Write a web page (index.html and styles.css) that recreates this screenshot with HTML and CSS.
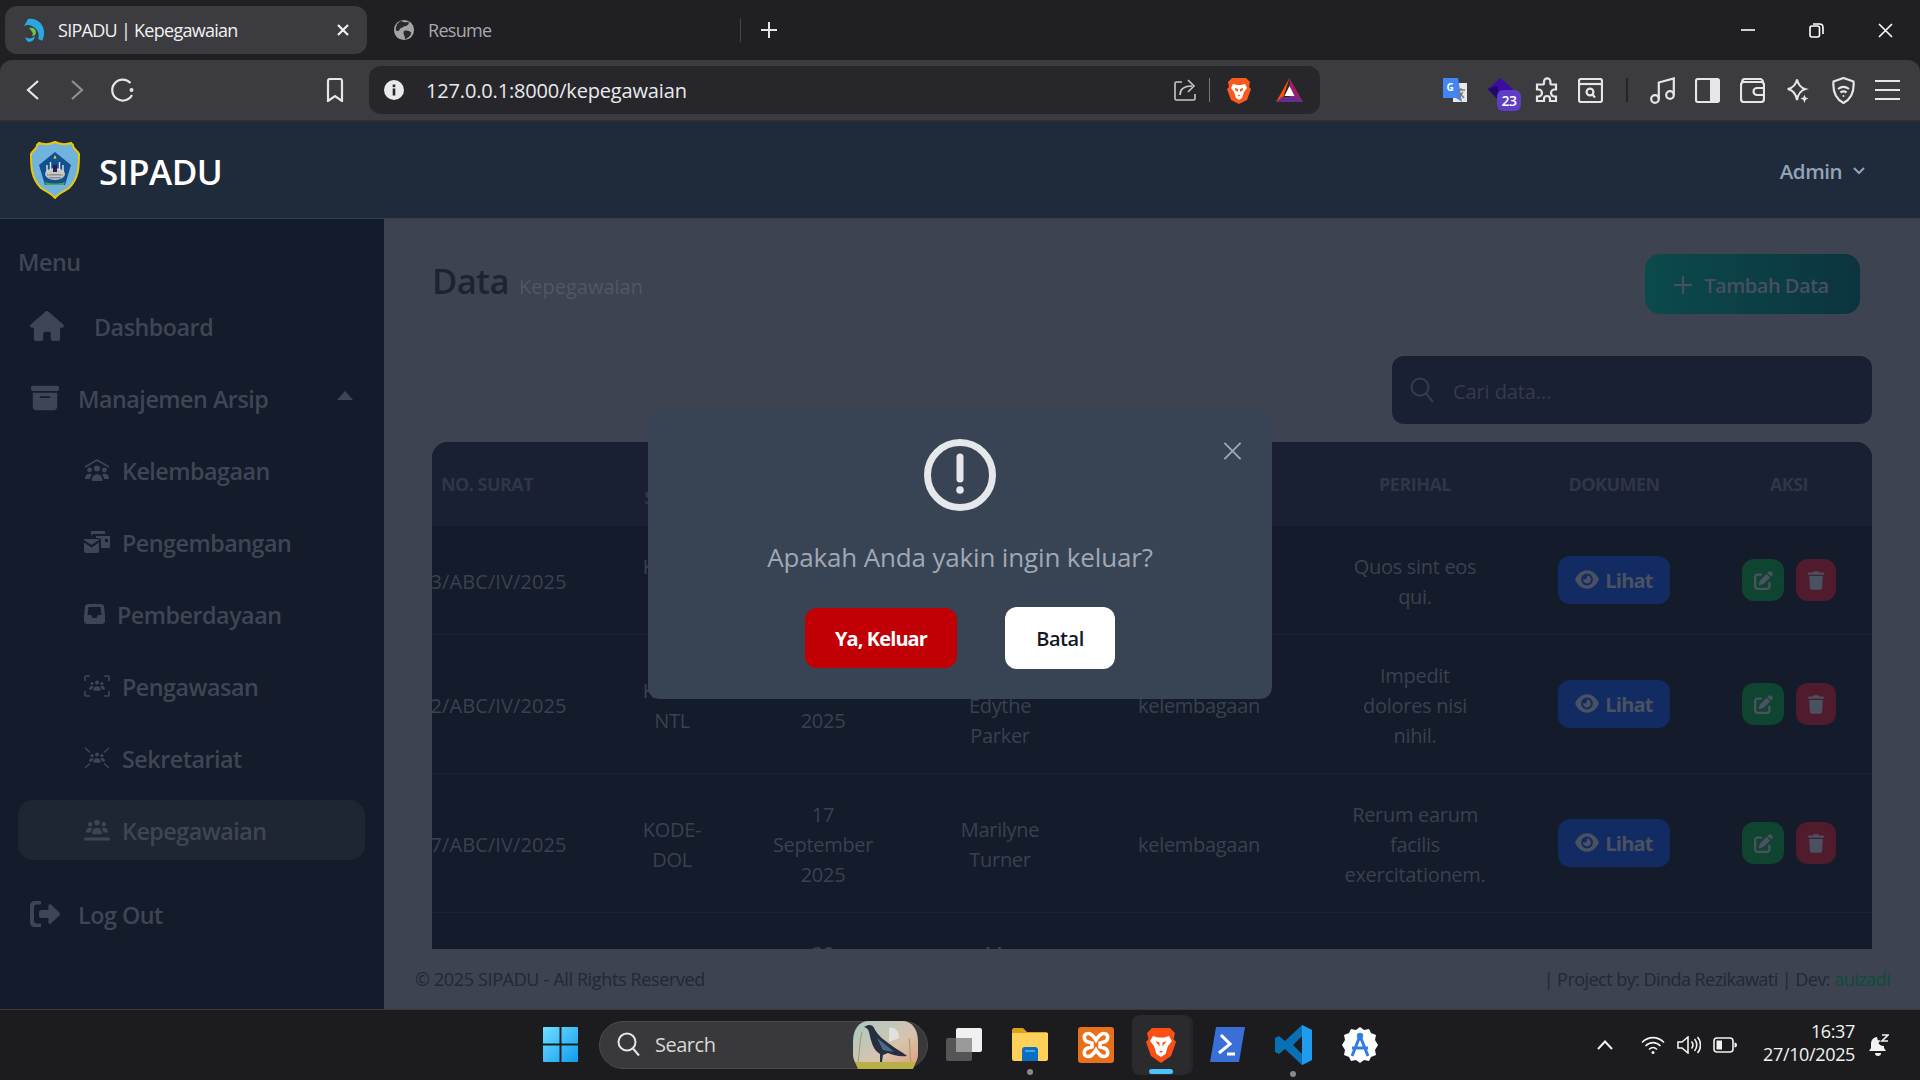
FILE: index.html
```html
<!DOCTYPE html>
<html lang="id">

<head>
    <meta charset="UTF-8">
    <title>SIPADU | Kepegawaian</title>
    <link rel="stylesheet" href="styles.css">
</head>

<body>
    <svg class="defs" width="0" height="0">
        <symbol id="trio" viewBox="0 0 24 16">
            <circle cx="12" cy="3.400" r="3"/>
            <circle cx="4.600" cy="5" r="2.400"/>
            <circle cx="19.400" cy="5" r="2.400"/>
            <path d="M6.600 16c0-4.600 2.200-6.800 5.400-6.800s5.400 2.200 5.400 6.800z"/>
            <path d="M0 14c0-3.400 1.700-5.200 4.400-5.200 1.100 0 2 .3 2.700 .8-1.300 1.300-2 3-2.200 4.400z"/>
            <path d="M24 14c0-3.400-1.700-5.200-4.400-5.200-1.100 0-2 .3-2.700 .8 1.300 1.300 2 3 2.200 4.400z"/>
        </symbol>
        <symbol id="eye" viewBox="0 0 576 512">
            <path d="M288 32c-80.800 0-145.500 36.800-192.600 80.600C48.600 156 17.300 208 2.500 243.700c-3.300 7.900-3.300 16.700 0 24.600C17.300 304 48.600 356 95.400 399.400C142.500 443.200 207.200 480 288 480s145.500-36.800 192.600-80.600c46.800-43.500 78.100-95.400 93-131.100c3.300-7.900 3.300-16.700 0-24.600c-14.900-35.700-46.200-87.700-93-131.100C433.500 68.800 368.800 32 288 32zM144 256a144 144 0 1 1 288 0 144 144 0 1 1 -288 0zm144-64c0 35.300-28.700 64-64 64c-7.100 0-13.900-1.200-20.300-3.300c-5.500-1.800-11.900 1.600-11.700 7.400c.3 6.900 1.300 13.800 3.200 20.700c13.700 51.200 66.400 81.600 117.600 67.900s81.600-66.400 67.900-117.600c-11.100-41.500-47.800-69.400-88.600-71.100c-5.800-.2-9.200 6.100-7.400 11.700c2.100 6.400 3.300 13.200 3.300 20.300z"/>
        </symbol>
        <symbol id="edit" viewBox="0 0 512 512">
            <path d="M471.600 21.700c-21.900-21.900-57.300-21.900-79.200 0L362.300 51.700l97.900 97.900 30.100-30.100c21.900-21.900 21.900-57.300 0-79.200L471.600 21.700zm-299.200 220c-6.100 6.100-10.800 13.600-13.500 21.900l-29.600 88.800c-2.900 8.600-.6 18.100 5.800 24.600s15.900 8.700 24.600 5.800l88.800-29.600c8.200-2.700 15.700-7.400 21.900-13.500L437.700 172.300 339.700 74.300 172.400 241.700zM96 64C43 64 0 107 0 160V416c0 53 43 96 96 96H352c53 0 96-43 96-96V320c0-17.700-14.300-32-32-32s-32 14.300-32 32v96c0 17.700-14.300 32-32 32H96c-17.700 0-32-14.300-32-32V160c0-17.700 14.300-32 32-32h96c17.700 0 32-14.300 32-32s-14.300-32-32-32H96z"/>
        </symbol>
        <symbol id="trash" viewBox="0 0 448 512">
            <path d="M135.200 17.700L128 32H32C14.300 32 0 46.300 0 64S14.300 96 32 96H416c17.700 0 32-14.300 32-32s-14.300-32-32-32H320l-7.200-14.300C307.400 6.800 296.300 0 284.200 0H163.800c-12.100 0-23.200 6.800-28.600 17.700zM416 128H32L53.200 467c1.600 25.300 22.600 45 47.900 45H346.900c25.300 0 46.300-19.700 47.900-45L416 128z"/>
        </symbol>
    </svg>

    <!-- tab strip -->
    <div class="tabstrip">
        <div class="tab tab-active">
            <svg class="favicon" viewBox="0 0 24 24">
                <path fill="#29a9e1" d="M6 1c8-1 15 4 16 12 .5 4-.5 7-2 10-1-1-3-2-4-2 1-2 1-6-1-9-2-3-6-5-10-5L2 8z"/>
                <path fill="#29a9e1" d="M3 19c3 2 7 2 10-1 0 3-3 6-6 6-2 0-3-3-4-5z"/>
                <path fill="#6cc24a" d="M7 10c4-1 7 1 7 4s-2 4-4 4c1-2 1-3 0-4-1-2-2-3-3-4z"/>
            </svg>
            <span class="tab-title">SIPADU | Kepegawaian</span>
            <svg class="tab-close" viewBox="0 0 14 14"><path d="M2 2l10 10M12 2L2 12"/></svg>
        </div>
        <div class="tab tab-other">
            <svg class="favicon-globe" viewBox="0 0 24 24">
                <circle cx="12" cy="12" r="11" fill="#a4a4a8"/>
                <path fill="#2a2a2e" d="M9 2c3 2 5 2 8 1 1 3-2 5-5 5-1 2-4 1-5 4-1 2-3 1-4 0 0-5 2-8 6-10zM12 13c3-1 6 0 8 2-1 4-4 6-7 7 1-3-3-6-1-9z"/>
            </svg>
            <span class="tab-title tab-title-dim">Resume</span>
        </div>
        <div class="tab-sep"></div>
        <svg class="tab-new" viewBox="0 0 16 16"><path d="M8 0v16M0 8h16"/></svg>
        <div class="window-btns">
            <svg class="win-min" viewBox="0 0 14 2"><path d="M0 1h14"/></svg>
            <svg class="win-restore" viewBox="0 0 15 15"><rect x="1" y="3" width="9.500" height="11" rx="2"/><path d="M4 1h6.500c2 0 3.500 1.500 3.500 3.500V11"/></svg>
            <svg class="win-close" viewBox="0 0 15 15"><path d="M1 1l13 13M14 1L1 14"/></svg>
        </div>
    </div>

    <!-- toolbar -->
    <div class="toolbar">
        <div class="nav-btns">
            <svg class="tool tool-back" viewBox="0 0 14 22"><path d="M12 2L2 11l10 9"/></svg>
            <svg class="tool tool-forward" viewBox="0 0 14 22"><path d="M2 2l10 9-10 9"/></svg>
            <svg class="tool tool-reload" viewBox="0 0 25 25"><path d="M20.500 5A10.500 10.500 0 1 0 22 17"/><circle cx="21.500" cy="12" r="2" class="solid"/></svg>
            <svg class="tool tool-bookmark" viewBox="0 0 18 24"><path d="M2 3c0-1 .7-2 2-2h10c1.300 0 2 1 2 2v20l-7-5-7 5z"/></svg>
        </div>
        <div class="urlbar">
            <svg class="url-info" viewBox="0 0 20 20"><circle cx="10" cy="10" r="10" fill="#e8eaed"/><rect x="8.700" y="8.500" width="2.600" height="7" fill="#27272b"/><rect x="8.700" y="4.500" width="2.600" height="2.600" fill="#27272b"/></svg>
            <span class="url-text">127.0.0.1:8000/kepegawaian</span>
            <svg class="tool url-share" viewBox="0 0 22 22"><path d="M8 3H2.500C1.500 3 1 3.500 1 4.500v15c0 1 .5 1.500 1.500 1.500h17c1 0 1.500-.5 1.500-1.500V15"/><path d="M6 16c0-6 4-9 12-9M14 1l6 6-6 6"/></svg>
            <div class="url-sep"></div>
            <svg class="brave-mini" viewBox="0 0 24 27">
                <path fill="#fb5a1c" d="M5 1h14l4 4-1 5 2 2-4 11-8 4-8-4-4-11 2-2-1-5z"/>
                <path fill="#fff" d="M6 7l4 1h4l4-1 2 4-3 4-2 6-3 2-3-2-2-6-3-4z"/>
                <path fill="#fb5a1c" d="M8 11l3 1v3l-3-2zM16 11l-3 1v3l3-2zM10.500 18h3L12 19.500z"/>
            </svg>
            <svg class="bat-mini" viewBox="0 0 27 24">
                <path fill="#9e1f63" d="M13.500 0L27 24H13.500z"/>
                <path fill="#ff5000" d="M13.500 0L0 24l7-4z"/>
                <path fill="#662d91" d="M0 24h27l-6-5H6z"/>
                <path fill="#fff" d="M13.500 8l5 10h-10z"/>
            </svg>
        </div>
        <div class="extensions">
            <svg class="ext-translate" viewBox="0 0 24 24">
                <path fill="#e8e8e8" d="M10 5h14v19H10z"/>
                <path fill="#4285f4" d="M0 0h15l4 24-6-4H0z"/>
                <text x="3.500" y="13" class="ext-g">G</text>
                <path d="M14 12h8M18 10v2M15 20l5-6M16 14l5 6" fill="none" stroke="#777" stroke-width="1.300"/>
            </svg>
            <div class="ext-badge">
                <svg viewBox="0 0 25 24"><path fill="#3a0ca3" d="M12.500 0L25 11 12.500 24 0 11z"/><path fill="#1c0a66" d="M0 11l10-3v14z"/></svg>
                <span class="badge-num">23</span>
            </div>
            <svg class="tool ext-puzzle" viewBox="0 0 26 26"><path d="M10 6V4.500a3.200 3.200 0 0 1 6.400 0V6c0 1 .6 1.500 1.500 1.500H22v5h-1.500a3.500 3.500 0 0 0 0 7H22V24h-6v-2a3 3 0 0 0-6 0v2H3v-4.500h1.500a3.500 3.500 0 0 0 0-7H3v-5h5.500C9.500 7.500 10 7 10 6z"/></svg>
            <svg class="tool ext-reader" viewBox="0 0 25 25"><rect x="1" y="1" width="23" height="23" rx="2"/><path d="M1 6h23"/><circle cx="12" cy="14" r="3.400"/><path d="M14.500 16.500l2.500 3"/></svg>
            <div class="tool-sep"></div>
            <svg class="tool ext-music" viewBox="0 0 25 27"><circle cx="5" cy="22" r="3.800"/><circle cx="20" cy="18" r="3.800"/><path d="M8.800 22V5.500L23.800 1.500V18"/></svg>
            <svg class="tool ext-panel" viewBox="0 0 25 25"><rect x="1" y="1" width="23" height="23" rx="2"/><path class="solid" d="M15 1h7c1.300 0 2 .7 2 2v19c0 1.300-.7 2-2 2h-7z"/></svg>
            <svg class="tool ext-wallet" viewBox="0 0 25 25"><rect x="1" y="4" width="23" height="20" rx="3"/><path d="M2 5c0-2.500 1.500-4 3-4h15c1.500 0 3 1.500 3 3"/><path d="M24 10h-7a3.500 3.500 0 0 0 0 7h7"/></svg>
            <svg class="tool ext-spark" viewBox="0 0 25 27"><path d="M12 1.500c1 5.500 4 9 9 10.500-5 1.500-8 5-9 12-1-7-4-10.500-10-12 6-1.500 9-5 10-10.500z"/><path class="solid" d="M20 18l1.300 3 3 1.200-3 1.300L20 27l-1.300-3.500-3-1.300 3-1.200z"/></svg>
            <svg class="tool ext-shield" viewBox="0 0 23 27"><path d="M11.500 1l10 3.500c.8 9-1 17-10 21.500-9-4.500-10.800-12.500-10-21.500z"/><path d="M6 12c3.500-2.800 7.500-2.800 11 0M8.500 15.500c2-1.400 4-1.400 6 0"/><circle cx="11.500" cy="19" r="1" class="solid"/></svg>
            <svg class="tool ext-menu" viewBox="0 0 25 22"><path d="M0 2h25M0 11h25M0 20h25"/></svg>
        </div>
    </div>

    <!-- app -->
    <div class="app">
        <header class="app-header">
            <svg class="logo" viewBox="0 0 50 58">
                <path fill="#6fb3de" stroke="#e8c80c" stroke-width="2" d="M25 1c4 2 10 3 16 1l2 2c-1 3 5 6 6 9 0 12 0 24-10 34-4 3-10 5-14 10-4-5-10-7-14-10C1 37 1 25 1 13c1-3 7-6 6-9l2-2c6 2 12 1 16-1z"/>
                <path fill="#12508f" d="M25 11l16 13-6 20H15L9 24z"/>
                <ellipse cx="25" cy="33" rx="10" ry="6" fill="#c3c8cc"/>
                <path fill="#4ca54a" d="M15 41c6 2 14 2 20 0l-1 3H16z"/>
                <path fill="none" stroke="#dfe6ec" stroke-width="1.400" d="M17 31v-7M20.500 29v-8M29.500 29v-8M33 31v-7"/>
                <path fill="#2a2050" d="M23 24h4v7h-4z"/>
                <path fill="#8a9098" d="M17 33h16v1.500H17zM19 36h12v1.500H19z"/>
                <path fill="#ffd83a" d="M25 14l1.500 3.500h-3zM18 32h1.500v1.500H18zM31 32h1.500v1.500H31z"/>
            </svg>
            <span class="brand">SIPADU</span>
            <div class="user-menu">
                <span>Admin</span>
                <svg class="user-chevron" viewBox="0 0 12 8"><path d="M1 1l5 5 5-5"/></svg>
            </div>
        </header>

        <div class="app-body">
            <aside class="sidebar">
                <div class="side-label">Menu</div>
                <a class="side-item side-dash">
                    <svg class="side-icon-home" viewBox="0 0 576 512"><path d="M575.800 255.500c0 18-15 32.100-32 32.100h-32l.7 160.200c0 2.700-.2 5.400-.5 8.100V472c0 22.100-17.900 40-40 40H456c-1.100 0-2.200 0-3.300-.1c-1.400 .1-2.800 .1-4.200 .1H416 392c-22.100 0-40-17.900-40-40V448 384c0-17.700-14.300-32-32-32H256c-17.700 0-32 14.300-32 32v64 24c0 22.100-17.900 40-40 40H160 128.100c-1.500 0-3-.1-4.500-.2c-1.200 .1-2.400 .2-3.600 .2H104c-22.100 0-40-17.900-40-40V360c0-.9 0-1.900 .1-2.800V287.600H32c-18 0-32-14-32-32.100c0-9 3-17 10-24L266.400 8c7-7 15-8 22-8s15 2 21 7L564.800 231.500c8 7 12 15 11 24z"/></svg>
                    Dashboard
                </a>
                <a class="side-item side-top">
                    <svg class="side-icon-top" viewBox="0 0 512 512"><path d="M32 32H480c17.700 0 32 14.300 32 32V96c0 17.700-14.300 32-32 32H32C14.300 128 0 113.700 0 96V64C0 46.300 14.300 32 32 32zm0 128H480V416c0 35.300-28.700 64-64 64H96c-35.300 0-64-28.700-64-64V160zm128 80c0 8.800 7.200 16 16 16H336c8.800 0 16-7.200 16-16s-7.200-16-16-16H176c-8.800 0-16 7.200-16 16z"/></svg>
                    Manajemen Arsip
                    <svg class="side-caret" viewBox="0 0 16 9"><path d="M8 0l8 9H0z"/></svg>
                </a>
                <a class="side-item side-sub">
                    <svg class="sub-icon" viewBox="0 0 26 22">
                        <path class="line" d="M1 8l12-7 12 7"/>
                        <use href="#trio" x="1" y="6" width="24" height="16"/>
                    </svg>
                    Kelembagaan
                </a>
                <a class="side-item side-sub">
                    <svg class="sub-icon" viewBox="0 0 26 22">
                        <path d="M7 0h14v3H10c-2 0-3 1-3 3z"/>
                        <path d="M12 5h14v12H17V10c0-2-1-3-3-3h-2zM21 8v3h3V8z" fill-rule="evenodd"/>
                        <path d="M1 8h13c1 0 1 .5 1 1l-7.500 5L0 9c0-.5 0-1 1-1zM0 11.500l7.500 5 7.500-5V20c0 1-.5 2-2 2H2c-1.500 0-2-1-2-2z"/>
                    </svg>
                    Pengembangan
                </a>
                <a class="side-item side-sub">
                    <svg class="sub-icon-inbox" viewBox="0 0 21 20"><path fill-rule="evenodd" d="M4 0h13c1.500 0 2.500 1 3 2l1 10v5c0 1.700-1.300 3-3 3H3c-1.700 0-3-1.300-3-3v-5L1 2c.5-1 1.500-2 3-2zm.5 3L3.500 11H7l1.500 3h4l1.500-3h3.500l-1-8z"/></svg>
                    Pemberdayaan
                </a>
                <a class="side-item side-sub">
                    <svg class="sub-icon" viewBox="0 0 26 22">
                        <path class="line" d="M1 6V2c0-.6 .4-1 1-1h4M20 1h4c.6 0 1 .4 1 1v4M1 16v4c0 .6 .4 1 1 1h4M20 21h4c.6 0 1-.4 1-1v-4"/>
                        <use href="#trio" x="5" y="4" width="16" height="13"/>
                    </svg>
                    Pengawasan
                </a>
                <a class="side-item side-sub">
                    <svg class="sub-icon" viewBox="0 0 26 22">
                        <path class="line" d="M1 1l5 4.500M25 1l-5 4.500M1 21l5-4.500M25 21l-5-4.500"/>
                        <use href="#trio" x="5" y="4" width="16" height="13"/>
                    </svg>
                    Sekretariat
                </a>
                <a class="side-item side-sub side-active">
                    <svg class="sub-icon" viewBox="0 0 26 22">
                        <use href="#trio" x="2" y="0" width="22" height="16"/>
                        <rect x="0" y="18.500" width="26" height="3" rx="1"/>
                    </svg>
                    Kepegawaian
                </a>
                <a class="side-item side-top side-logout">
                    <svg class="side-icon-top" viewBox="0 0 30 26">
                        <path d="M11 0v3.500H6.500C5 3.500 4 4.500 4 6v14c0 1.500 1 2.500 2.500 2.500H11V26H5c-3 0-5-2-5-5V5c0-3 2-5 5-5z"/>
                        <path d="M19 3.500c.6-.6 1.400-.3 1.800 .1l8.600 8c.8 .8 .8 2 0 2.800l-8.600 8c-.4 .4-1.200 .7-1.800 .1-.4-.3-.6-.8-.6-1.300V17H11c-1 0-2-1-2-2v-4c0-1 1-2 2-2h7.400V4.800c0-.5 .2-1 .6-1.300z"/>
                    </svg>
                    Log Out
                </a>
            </aside>

            <main class="main">
                <div class="content">
                    <div class="page-head">
                        <div class="page-title">
                            <h1>Data</h1>
                            <span>Kepegawaian</span>
                        </div>
                        <button class="btn-add">
                            <svg viewBox="0 0 18 18"><path d="M9 0v18M0 9h18"/></svg>
                            Tambah Data
                        </button>
                    </div>
                    <div class="search-box">
                        <svg viewBox="0 0 24 26"><circle cx="10" cy="10" r="8.500"/><path d="M16 16.500l7 8.500"/></svg>
                        <span>Cari data...</span>
                    </div>
                    <div class="table-wrap">
                        <table class="data-table">
                            <colgroup>
                                <col class="col-no">
                                <col class="col-kode">
                                <col class="col-tgl">
                                <col class="col-nama">
                                <col class="col-kat">
                                <col class="col-perihal">
                                <col class="col-dok">
                                <col class="col-aksi">
                            </colgroup>
                            <thead>
                                <tr>
                                    <th>NO. SURAT</th>
                                    <th>KODE SURAT</th>
                                    <th>TANGGAL</th>
                                    <th>PENGIRIM</th>
                                    <th>BIDANG</th>
                                    <th>PERIHAL</th>
                                    <th>DOKUMEN</th>
                                    <th>AKSI</th>
                                </tr>
                            </thead>
                            <tbody>
                                <tr>
                                    <td class="no">183/ABC/IV/2025</td>
                                    <td>KODE-<br>SDM</td>
                                    <td>05 Mei<br>2025</td>
                                    <td>Lia<br>Kuhn</td>
                                    <td>kelembagaan</td>
                                    <td>Quos sint eos<br>qui.</td>
                                    <td class="cell-btn"><button class="btn-view"><svg><use href="#eye"/></svg>Lihat</button></td>
                                    <td class="cell-btn"><div class="actions"><button class="btn-edit"><svg><use href="#edit"/></svg></button><button class="btn-del"><svg><use href="#trash"/></svg></button></div></td>
                                </tr>
                                <tr>
                                    <td class="no">152/ABC/IV/2025</td>
                                    <td>KODE-<br>NTL</td>
                                    <td>11 Oktober<br>2025</td>
                                    <td>Prof.<br>Edythe<br>Parker</td>
                                    <td>kelembagaan</td>
                                    <td>Impedit<br>dolores nisi<br>nihil.</td>
                                    <td class="cell-btn"><button class="btn-view"><svg><use href="#eye"/></svg>Lihat</button></td>
                                    <td class="cell-btn"><div class="actions"><button class="btn-edit"><svg><use href="#edit"/></svg></button><button class="btn-del"><svg><use href="#trash"/></svg></button></div></td>
                                </tr>
                                <tr>
                                    <td class="no">167/ABC/IV/2025</td>
                                    <td>KODE-<br>DOL</td>
                                    <td>17<br>September<br>2025</td>
                                    <td>Marilyne<br>Turner</td>
                                    <td>kelembagaan</td>
                                    <td>Rerum earum<br>facilis<br>exercitationem.</td>
                                    <td class="cell-btn"><button class="btn-view"><svg><use href="#eye"/></svg>Lihat</button></td>
                                    <td class="cell-btn"><div class="actions"><button class="btn-edit"><svg><use href="#edit"/></svg></button><button class="btn-del"><svg><use href="#trash"/></svg></button></div></td>
                                </tr>
                                <tr>
                                    <td class="no">120/ABC/IV/2025</td>
                                    <td>KODE-<br>ARS</td>
                                    <td>20<br>Agustus<br>2025</td>
                                    <td>Mr.<br>Ike<br>Hayes</td>
                                    <td>kelembagaan</td>
                                    <td>Sit quia<br>nemo.</td>
                                    <td class="cell-btn"><button class="btn-view"><svg><use href="#eye"/></svg>Lihat</button></td>
                                    <td class="cell-btn"><div class="actions"><button class="btn-edit"><svg><use href="#edit"/></svg></button><button class="btn-del"><svg><use href="#trash"/></svg></button></div></td>
                                </tr>
                            </tbody>
                        </table>
                    </div>
                </div>
                <footer class="app-footer">
                    <span class="foot-left">© 2025 SIPADU - All Rights Reserved</span>
                    <span class="foot-right">| Project by: Dinda Rezikawati | Dev: <a class="dev-link">auizadi</a></span>
                </footer>
            </main>
        </div>

        <!-- logout confirm -->
        <div class="modal-layer">
            <div class="modal">
                <svg class="modal-close" viewBox="0 0 20 20"><path d="M1 1l18 18M19 1L1 19"/></svg>
                <svg class="modal-warn" viewBox="0 0 72 72">
                    <circle cx="36" cy="36" r="32.500"/>
                    <path d="M36 18v22"/>
                    <circle class="solid" cx="36" cy="51" r="3.800"/>
                </svg>
                <p class="modal-text">Apakah Anda yakin ingin keluar?</p>
                <div class="modal-btns">
                    <button class="btn-yes">Ya, Keluar</button>
                    <button class="btn-cancel">Batal</button>
                </div>
            </div>
        </div>
    </div>

    <!-- taskbar -->
    <div class="taskbar">
        <svg class="task-start" viewBox="0 0 35 35">
            <defs>
                <linearGradient id="winblue" x1="0" y1="0" x2="1" y2="1">
                    <stop offset="0" stop-color="#6fe0ff"/>
                    <stop offset="1" stop-color="#0f9bf0"/>
                </linearGradient>
            </defs>
            <path fill="url(#winblue)" d="M0 1c0-.6 .4-1 1-1h15.500v16.500H0zM18.500 0H34c.6 0 1 .4 1 1v15.500H18.500zM0 18.500h16.500V35H1c-.6 0-1-.4-1-1zM18.500 18.500H35V34c0 .6-.4 1-1 1H18.500z"/>
        </svg>
        <div class="task-search">
            <svg class="task-search-icon" viewBox="0 0 23 25"><circle cx="10" cy="10" r="8.500"/><path d="M16 16.500l6 7"/></svg>
            <span>Search</span>
            <svg class="task-bird" viewBox="0 0 69 50">
                <defs>
                    <linearGradient id="birdsky" x1="0" y1="0" x2="1" y2="1">
                        <stop offset="0" stop-color="#a9c9c6"/>
                        <stop offset="0.600" stop-color="#d9c3ad"/>
                        <stop offset="1" stop-color="#e09a78"/>
                    </linearGradient>
                </defs>
                <path fill="url(#birdsky)" d="M18 1h33c10 0 16 8 16 21v12c0 9-6 15-16 15H18C8 49 2 43 2 34V22C2 9 8 1 18 1z"/>
                <path fill="#b9b048" d="M4 42h61l-3 7H7z"/>
                <path fill="#e8eef0" opacity=".7" d="M38 8c6-2 10 4 10 10l-10 4z"/>
                <path fill="none" stroke="#a89a5a" stroke-width="1" d="M7 42c2-10 1-20 4-30M60 42c-2-8 0-16-2-24"/>
                <path fill="#262f3f" d="M15 6c3-2 7-1 8 2 4 8 10 12 17 17 5 4 10 6 16 11-7 1-14-1-19-3l-5 2-1 7h-2l0-8c-7-4-9-13-11-22-1-3-2-4-5-5z"/>
                <path fill="#4e6a8a" d="M26 18c5 4 12 9 17 14l-11-2z"/>
            </svg>
        </div>
        <svg class="task-view" viewBox="0 0 36 33">
            <rect x="0" y="10" width="26" height="23" rx="2" fill="#555"/>
            <rect x="10" y="0" width="26" height="24" rx="2" fill="#f0f0f0"/>
            <rect x="10" y="10" width="16" height="14" fill="#9a9a9a"/>
        </svg>
        <div class="task-app task-app-run">
            <svg viewBox="0 0 36 33">
                <path fill="#d9a21b" d="M0 2c0-1 1-2 2-2h9l4 4h19c1 0 2 1 2 2v4H0z"/>
                <path fill="#ffd05a" d="M0 5h36v26c0 1-1 2-2 2H2c-1 0-2-1-2-2z"/>
                <path fill="#0d6fc2" d="M10 22c0-2 1-3 3-3h10c2 0 3 1 3 3v11H10z"/>
                <path fill="#3ba7f0" d="M13 22h10v2H13z"/>
            </svg>
        </div>
        <svg class="task-xampp" viewBox="0 0 36 36">
            <rect width="36" height="36" rx="3" fill="#e8701a"/>
            <path fill="none" stroke="#fff" stroke-width="3.500" d="M8 7c4-2 7 1 10 6 3-5 6-8 10-6 3 2 2 7-2 8l-4 1 0 4 4 1c4 1 5 6 2 8-4 2-7-1-10-6-3 5-6 8-10 6-3-2-2-7 2-8l4-1 0-4-4-1C6 14 5 9 8 7z"/>
        </svg>
        <div class="task-tile">
            <svg viewBox="0 0 30 36">
                <path fill="#fb4f15" d="M6 1h18l5 5-1.500 6 2.500 3-5 14-10 7-10-7-5-14 2.500-3L1 6z"/>
                <path fill="#fff" d="M7 9l5 1.500h6L23 9l3 5-4 5-2.500 8-4.500 3-4.500-3L8 19l-4-5z"/>
                <path fill="#fb4f15" d="M9.500 14l4 1.500v4zM20.500 14l-4 1.500v4zM13 24h4l-2 2z"/>
            </svg>
            <div class="task-active-bar"></div>
        </div>
        <svg class="task-term" viewBox="0 0 35 35">
            <path fill="#3a6fd8" d="M6 0h29l-6 35H0z"/>
            <path fill="none" stroke="#fff" stroke-width="3" d="M11 8l9 9-11 9M17 27h8"/>
        </svg>
        <div class="task-app task-app-run task-code">
            <svg viewBox="0 0 37 40">
                <path fill="#0a70b5" d="M27 0l10 5v30l-10 5L10 24l-6 5-4-2V13l4-2 6 5zm0 11l-9 9 9 9z"/>
                <path fill="#1f9cf0" d="M27 0l10 5v30l-10 5z"/>
            </svg>
        </div>
        <svg class="task-studio" viewBox="0 0 36 36">
            <path fill="#fff" d="M18 0l4 3 5-1 2 4 5 2-1 5 3 5-3 5 1 5-5 2-2 4-5-1-4 3-4-3-5 1-2-4-5-2 1-5-3-5 3-5-1-5 5-2 2-4 5 1z"/>
            <path fill="none" stroke="#2f7de1" stroke-width="3" d="M18 9l-8 20M18 9l8 20M10 21h16"/>
            <circle cx="18" cy="9" r="3.200" fill="#2f7de1"/>
        </svg>
        <div class="tray">
            <svg class="tray-chevron" viewBox="0 0 16 10"><path d="M1 9l7-7.500L15 9"/></svg>
            <svg class="tray-icon tray-wifi" viewBox="0 0 24 18"><path d="M1 6.500c6.500-6.500 15.500-6.500 22 0M4.500 10c4.500-4.500 10.500-4.500 15 0M8 13.500c2.500-2.500 5.500-2.500 8 0"/><circle class="solid" cx="12" cy="16.500" r="1.500"/></svg>
            <svg class="tray-icon tray-vol" viewBox="0 0 24 18"><path d="M1 6v6h4l6 5V1L5 6zM14.500 5.500c1.700 2 1.700 5 0 7M17.500 3c3 3.500 3 8.500 0 12M20.500 1c4 4.500 4 11.500 0 16"/></svg>
            <svg class="tray-icon tray-batt" viewBox="0 0 24 16"><rect x="1" y="1" width="19" height="14" rx="3"/><rect class="solid" x="3.500" y="3.500" width="5.500" height="9"/><path class="solid" d="M21.500 5.500c1.500 0 2.500 1 2.500 2.500s-1 2.500-2.500 2.500z"/></svg>
            <div class="tray-clock">
                <div>16:37</div>
                <div>27/10/2025</div>
            </div>
            <svg class="tray-bell" viewBox="0 0 21 22">
                <path d="M9 3c-4 .5-6 3-6 7v4l-2 3h17l-2-3v-2c-2 0-6-1-6-5z"/>
                <path d="M7 19h6c0 2-1 3-3 3s-3-1-3-3z"/>
                <path class="bell-z" d="M7 7h4L7 12h4M14 1h6l-6 6h6"/>
            </svg>
        </div>
    </div>
</body>

</html>
```
FILE: styles.css
```css
* {
    box-sizing: border-box;
}

html,
body {
    margin: 0;
    height: 100%;
}

body {
    width: 1920px;
    height: 1080px;
    overflow: hidden;
    display: flex;
    flex-direction: column;
    font-family: "Open Sans", "Liberation Sans", sans-serif;
    letter-spacing: -0.03em;
    background: #1f1f24;
}

svg {
    display: block;
    flex: none;
}

.defs {
    position: absolute;
}

button {
    font: inherit;
    letter-spacing: inherit;
    border: 0;
}

.tool {
    fill: none;
    stroke: #e6e6e8;
    stroke-width: 2.2;
}

.tool .solid {
    fill: #e6e6e8;
    stroke: none;
}

/* tab strip */
.tabstrip {
    height: 60px;
    flex: none;
    display: flex;
    align-items: center;
    padding-left: 5px;
    background: #1f1f24;
}

.tab {
    width: 362px;
    height: 48px;
    display: flex;
    align-items: center;
    padding-left: 17px;
    border-radius: 12px;
}

.tab-active {
    background: #3b3b40;
}

.tab-other {
    width: 373px;
    padding-left: 23px;
}

.favicon {
    width: 24px;
    height: 24px;
}

.favicon-globe {
    width: 22px;
    height: 22px;
    margin-left: 3px;
}

.tab-title {
    margin-left: 12px;
    font-size: 18px;
    letter-spacing: -0.04em;
    color: #f1f1f3;
}

.tab-title-dim {
    margin-left: 13px;
    color: #a9a9ad;
}

.tab-close {
    width: 14px;
    height: 14px;
    margin-left: auto;
    margin-right: 17px;
    fill: none;
    stroke: #f1f1f3;
    stroke-width: 2.2;
}

.tab-sep {
    width: 1px;
    height: 24px;
    background: #45454a;
}

.tab-new {
    width: 16px;
    height: 16px;
    margin-left: 20px;
    fill: none;
    stroke: #e6e6e8;
    stroke-width: 2;
}

.window-btns {
    margin-left: auto;
    display: flex;
    align-items: center;
    padding-right: 27px;
    fill: none;
    stroke: #fff;
    stroke-width: 1.6;
}

.win-min {
    width: 14px;
    height: 2px;
    margin-right: 54px;
}

.win-restore {
    width: 15px;
    height: 15px;
    margin-right: 54px;
}

.win-close {
    width: 15px;
    height: 15px;
}

/* toolbar */
.toolbar {
    height: 62px;
    flex: none;
    display: flex;
    align-items: flex-start;
    padding-top: 6px;
    background: #3b3b40;
    border-radius: 12px 12px 0 0;
    border-bottom: 2px solid #2e2e32;
}

.nav-btns {
    width: 369px;
    height: 48px;
    flex: none;
    display: flex;
    align-items: center;
    padding-left: 26px;
}

.tool-back {
    width: 14px;
    height: 22px;
}

.tool-forward {
    width: 14px;
    height: 22px;
    margin-left: 30px;
    stroke: #8f8f93;
}

.tool-reload {
    width: 25px;
    height: 25px;
    margin-left: 26px;
}

.tool-bookmark {
    width: 18px;
    height: 24px;
    margin-left: 191px;
}

.urlbar {
    width: 951px;
    height: 48px;
    flex: none;
    display: flex;
    align-items: center;
    padding-left: 15px;
    border-radius: 12px;
    background: #27272b;
}

.url-info {
    width: 20px;
    height: 20px;
}

.url-text {
    margin-left: 22px;
    font-size: 20px;
    letter-spacing: -0.008em;
    color: #e8eaed;
}

.url-share {
    width: 22px;
    height: 22px;
    margin-left: auto;
    stroke: #c8c8ca;
    stroke-width: 1.6;
}

.url-sep {
    width: 1px;
    height: 24px;
    margin-left: 13px;
    background: #77777b;
}

.brave-mini {
    width: 24px;
    height: 27px;
    margin-left: 17px;
}

.bat-mini {
    width: 27px;
    height: 24px;
    margin-left: 25px;
    margin-right: 17px;
}

.extensions {
    flex: 1;
    height: 48px;
    display: flex;
    align-items: center;
    gap: 20px;
    padding-left: 123px;
}

.ext-translate {
    width: 24px;
    height: 24px;
}

.ext-g {
    font-size: 10px;
    font-weight: 700;
    fill: #fff;
}

.ext-badge {
    width: 33px;
    height: 33px;
    margin-top: 9px;
    position: relative;
    margin-left: 1px;
}

.ext-badge svg {
    width: 25px;
    height: 24px;
}

.badge-num {
    position: absolute;
    right: 0;
    bottom: 0;
    width: 24px;
    height: 21px;
    border-radius: 6px;
    background: #5f3dc4;
    color: #fff;
    font-size: 14px;
    font-weight: 600;
    line-height: 21px;
    text-align: center;
}

.ext-puzzle {
    width: 26px;
    height: 26px;
    margin-left: -7px;
}

.ext-reader {
    width: 25px;
    height: 25px;
    margin-left: -2px;
}

.tool-sep {
    width: 2px;
    height: 24px;
    margin-left: 3px;
    background: #242428;
}

.ext-music {
    width: 25px;
    height: 27px;
    margin-left: 2px;
}

.ext-panel,
.ext-wallet,
.ext-spark {
    width: 25px;
    height: 25px;
}

.ext-shield {
    width: 23px;
    height: 27px;
    margin-left: 2px;
}

.ext-menu {
    width: 25px;
    height: 22px;
}

/* app */
.app {
    height: 887px;
    flex: none;
    position: relative;
    display: flex;
    flex-direction: column;
}

.app-header {
    height: 97px;
    flex: none;
    display: flex;
    align-items: center;
    padding: 2px 55px 0 30px;
    background: #1f2a3b;
    border-bottom: 1px solid #35404f;
}

.logo {
    width: 50px;
    height: 58px;
    margin-top: -2px;
}

.brand {
    margin-left: 19px;
    font-size: 35px;
    font-weight: 600;
    color: #fff;
}

.user-menu {
    margin-left: auto;
    display: flex;
    align-items: center;
    gap: 11px;
    font-size: 20.500px;
    font-weight: 600;
    color: #94a3b8;
}

.user-chevron {
    width: 12px;
    height: 8px;
    fill: none;
    stroke: #94a3b8;
    stroke-width: 2;
}

.app-body {
    flex: 1;
    min-height: 0;
    display: flex;
}

/* sidebar */
.sidebar {
    width: 384px;
    flex: none;
    padding: 24px 19px 0 18px;
    background: #141b2a;
    color: #3e4656;
    font-size: 23.300px;
    font-weight: 600;
    fill: #3e4656;
}

.side-label {
    height: 53px;
    line-height: 38px;
}

.side-item {
    height: 60px;
    display: flex;
    align-items: center;
    margin-bottom: 12px;
    padding-top: 2px;
    border-radius: 15px;
    padding-left: 12px;
}

.side-item svg {
    margin-top: -2px;
}

.side-icon-home {
    width: 34px;
    height: 30px;
    margin-right: 30px;
}

.side-icon-top {
    width: 30px;
    height: 28px;
    margin-right: 18px;
}

.side-item .side-caret {
    width: 16px;
    height: 9px;
    margin-left: auto;
    margin-right: 12px;
    margin-top: -8px;
}

.side-sub {
    padding-left: 66px;
}

.sub-icon {
    width: 26px;
    height: 22px;
    margin-right: 12px;
}

.sub-icon .line {
    fill: none;
    stroke: #3e4656;
    stroke-width: 1.6;
}

.sub-icon-inbox {
    width: 21px;
    height: 20px;
    margin-right: 12px;
}

.side-active {
    background: #1e2533;
}

.side-logout {
    margin-top: 24px;
}

/* main */
.main {
    flex: 1;
    min-width: 0;
    display: flex;
    flex-direction: column;
    background: #3d4350;
}

.content {
    flex: 1;
    min-height: 0;
    overflow: hidden;
    padding: 35px 48px 0;
}

.page-head {
    display: flex;
    align-items: center;
    justify-content: space-between;
    padding-right: 12px;
}

.page-title {
    display: flex;
    align-items: baseline;
    gap: 10px;
    margin-top: -7px;
}

.page-title h1 {
    margin: 0;
    font-size: 34.500px;
    font-weight: 600;
    color: #1c2332;
}

.page-title span {
    font-size: 20px;
    letter-spacing: 0;
    color: #515766;
}

.btn-add {
    width: 215px;
    height: 60px;
    display: flex;
    align-items: center;
    justify-content: center;
    gap: 12px;
    border-radius: 15px;
    background: linear-gradient(90deg, #0b4a4c, #0c3440);
    color: #475060;
    font-size: 20px;
    font-weight: 600;
    padding: 2px 2px 0 0;
}

.btn-add svg {
    width: 18px;
    height: 18px;
    fill: none;
    stroke: #475060;
    stroke-width: 2;
}

.search-box {
    width: 480px;
    height: 68px;
    margin: 42px 0 18px auto;
    display: flex;
    align-items: center;
    padding-left: 18px;
    gap: 19px;
    border-radius: 12px;
    background: #1a2033;
    color: #343b4b;
    font-size: 20px;
    letter-spacing: -0.005em;
}

.search-box svg {
    width: 24px;
    height: 26px;
    fill: none;
    stroke: #343b4b;
    stroke-width: 2;
}

.search-box span {
    padding-top: 2px;
}

.table-wrap {
    overflow: hidden;
    border-radius: 16px 16px 0 0;
    background: #141b2a;
}

.data-table {
    width: 1506px;
    margin-left: -66px;
    table-layout: fixed;
    border-collapse: collapse;
    color: #3a4150;
    font-size: 20px;
    letter-spacing: -0.015em;
    line-height: 30px;
}

.col-no { width: 242px; }
.col-kode { width: 128px; }
.col-tgl { width: 174px; }
.col-nama { width: 180px; }
.col-kat { width: 218px; }
.col-perihal { width: 214px; }
.col-dok { width: 184px; }
.col-aksi { width: 166px; }

.data-table th {
    height: 84px;
    padding: 15px 24px;
    background: #1a2033;
    color: #2f3646;
    font-size: 18px;
    font-weight: 700;
    letter-spacing: -0.03em;
    line-height: 27px;
    text-align: center;
}

.data-table td {
    padding: 26px 24px 22px;
    text-align: center;
    border-bottom: 1px solid #1c2333;
}

.data-table .no {
    white-space: nowrap;
    letter-spacing: 0.005em;
}

.data-table .cell-btn {
    padding: 24px;
    letter-spacing: -0.04em;
}

.btn-view {
    width: 112px;
    height: 48px;
    display: inline-flex;
    align-items: center;
    justify-content: center;
    gap: 6px;
    vertical-align: middle;
    padding-top: 2px;
    border-radius: 12px;
    background: #122c63;
    color: #4a5160;
    font-size: 20px;
    font-weight: 700;
    fill: #4a5160;
}

.btn-view svg {
    width: 24px;
    height: 21px;
    margin-top: -2px;
}

.actions {
    display: flex;
    justify-content: center;
    gap: 12px;
}

.btn-edit,
.btn-del {
    height: 42px;
    display: flex;
    align-items: center;
    justify-content: center;
    border-radius: 12px;
    fill: #4a5160;
}

.btn-edit {
    width: 42px;
    background: #0f4530;
}

.btn-del {
    width: 40px;
    background: #511b2e;
}

.btn-edit svg {
    width: 19px;
    height: 19px;
}

.btn-del svg {
    width: 16px;
    height: 19px;
}

.app-footer {
    height: 60px;
    flex: none;
    display: flex;
    align-items: center;
    justify-content: space-between;
    padding: 0 30px 0 31px;
    background: #3d4350;
    color: #20283a;
    font-size: 18px;
}

.foot-left {
    letter-spacing: -0.02em;
}

.foot-right {
    letter-spacing: -0.03em;
}

.dev-link {
    color: #0b4d3a;
}

/* modal */
.modal-layer {
    position: absolute;
    inset: 0;
    display: flex;
    justify-content: center;
    padding-top: 287px;
    pointer-events: none;
}

.modal {
    width: 624px;
    height: 290px;
    position: relative;
    display: flex;
    flex-direction: column;
    align-items: center;
    padding-top: 30px;
    border-radius: 12px;
    background: #384354;
}

.modal-close {
    position: absolute;
    top: 33px;
    right: 30px;
    width: 19px;
    height: 18px;
    fill: none;
    stroke: #a3aab6;
    stroke-width: 2;
}

.modal-warn {
    width: 72px;
    height: 72px;
    fill: none;
    stroke: #e5e7eb;
    stroke-width: 7;
    stroke-linecap: round;
}

.modal-warn .solid {
    fill: #e5e7eb;
    stroke: none;
}

.modal-text {
    margin: 28px 0 0;
    font-size: 26px;
    letter-spacing: -0.006em;
    line-height: 36px;
    color: #a1a8b4;
}

.modal-btns {
    margin-top: 32px;
    display: flex;
    align-items: center;
    gap: 48px;
}

.btn-yes {
    width: 152px;
    height: 60px;
    padding-top: 2px;
    border-radius: 12px;
    background: #c00005;
    color: #fff;
    font-size: 20px;
    font-weight: 700;
    letter-spacing: -0.045em;
}

.btn-cancel {
    width: 110px;
    height: 62px;
    padding-top: 2px;
    border-radius: 12px;
    background: #fff;
    color: #111827;
    font-size: 20px;
    font-weight: 600;
}

/* taskbar */
.taskbar {
    height: 71px;
    flex: none;
    display: flex;
    align-items: center;
    padding: 0 0 1px 543px;
    background: #1c1c1e;
    border-top: 1px solid #3a3a3c;
}

.task-start {
    width: 35px;
    height: 35px;
}

.task-search {
    width: 329px;
    height: 48px;
    margin-left: 21px;
    display: flex;
    align-items: center;
    padding-left: 17px;
    border-radius: 24px;
    border: 1px solid #4a4a4c;
    background: #39393b;
    color: #d8d8d8;
    font-size: 20px;
}

.task-search-icon {
    width: 23px;
    height: 25px;
    fill: none;
    stroke: #e6e6e6;
    stroke-width: 2;
}

.task-search span {
    margin-left: 15px;
}

.task-bird {
    width: 69px;
    height: 50px;
    margin-left: auto;
    margin-right: 7px;
}

.task-view {
    width: 36px;
    height: 33px;
    margin-left: 18px;
}

.task-app {
    width: 36px;
    margin-left: 30px;
    position: relative;
}

.task-app svg {
    width: 36px;
    height: 33px;
}

.task-app-run::after {
    content: "";
    position: absolute;
    left: 15px;
    bottom: -14px;
    width: 6px;
    height: 6px;
    border-radius: 50%;
    background: #8a8a8c;
}

.task-xampp {
    width: 36px;
    height: 36px;
    margin-left: 30px;
}

.task-tile {
    width: 58px;
    height: 60px;
    margin-left: 18px;
    position: relative;
    display: flex;
    justify-content: center;
    padding-top: 12px;
    border-radius: 8px;
    background: #2b2b2d;
    box-shadow: 3px 0 0 #262628;
}

.task-tile svg {
    width: 30px;
    height: 36px;
}

.task-active-bar {
    position: absolute;
    left: 17px;
    bottom: 1px;
    width: 24px;
    height: 5px;
    border-radius: 3px;
    background: #4cc2ff;
}

.task-term {
    width: 35px;
    height: 35px;
    margin-left: 20px;
}

.task-code {
    width: 37px;
}

.task-code svg {
    width: 37px;
    height: 40px;
}

.task-code::after {
    bottom: -12px;
}

.task-studio {
    width: 36px;
    height: 36px;
    margin-left: 30px;
}

.tray {
    margin-left: auto;
    display: flex;
    align-items: center;
    padding-right: 31px;
    color: #f2f2f2;
    font-size: 18px;
    letter-spacing: -0.02em;
}

.tray-chevron {
    width: 16px;
    height: 10px;
    margin-right: 28px;
    fill: none;
    stroke: #f2f2f2;
    stroke-width: 2;
}

.tray-icon {
    width: 24px;
    height: 18px;
    margin-right: 12px;
    fill: none;
    stroke: #f2f2f2;
    stroke-width: 1.6;
}

.tray-icon .solid {
    fill: #f2f2f2;
    stroke: none;
}

.tray-clock {
    width: 106px;
    margin-top: -3px;
    margin-right: 13px;
    text-align: right;
    line-height: 23px;
}

.tray-bell {
    width: 21px;
    height: 22px;
    fill: #f2f2f2;
}

.bell-z {
    fill: none;
    stroke: #f2f2f2;
    stroke-width: 1.600;
}
```
